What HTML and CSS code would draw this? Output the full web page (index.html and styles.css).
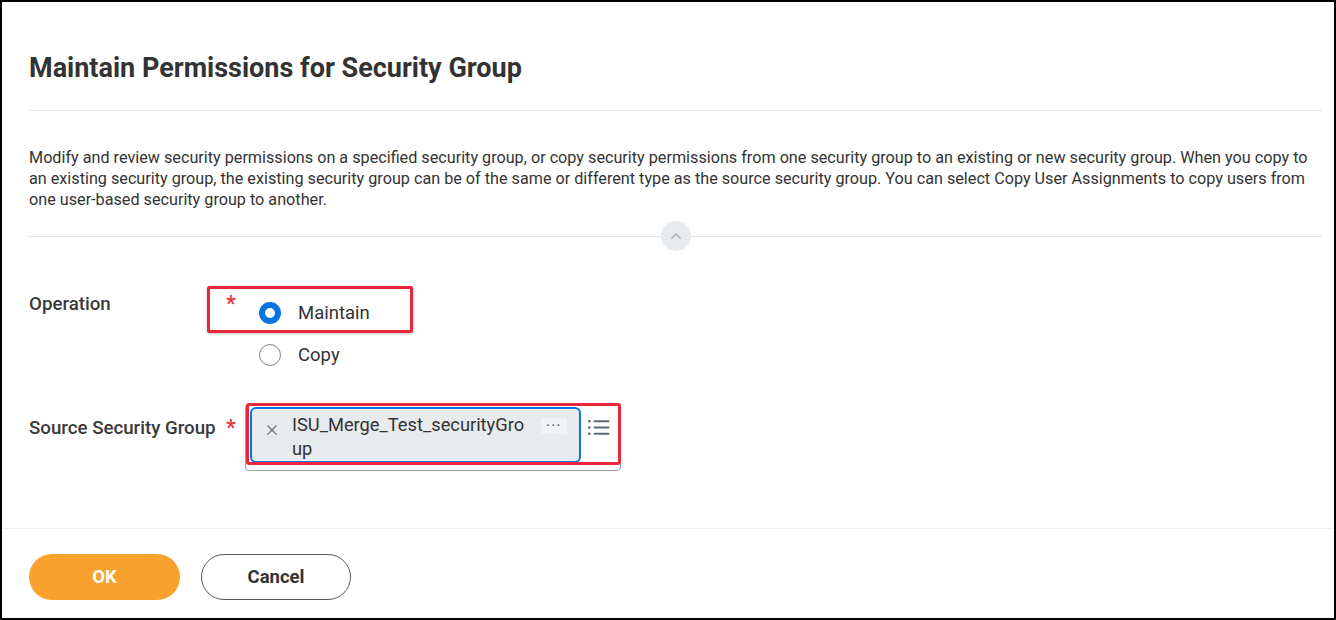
FILE: index.html
```html
<!DOCTYPE html>
<html>
<head>
<meta charset="utf-8">
<link rel="stylesheet" href="styles.css">
</head>
<body>
<div class="frame">
  <div class="main">
    <h1 class="title">Maintain Permissions for Security Group</h1>
    <div class="rule"></div>
    <p class="desc">Modify and review security permissions on a specified security group, or copy security permissions from one security group to an existing or new security group. When you copy to an existing security group, the existing security group can be of the same or different type as the source security group. You can select Copy User Assignments to copy users from one user-based security group to another.</p>
    <div class="collapse">
      <span class="collapse-line"></span>
      <span class="collapse-btn">
        <svg width="12" height="8" viewBox="0 0 12 8"><path d="M1.5 6.5 L6 2 L10.5 6.5" fill="none" stroke="#a3abb3" stroke-width="1.3"/></svg>
      </span>
      <span class="collapse-line"></span>
    </div>

    <div class="row row-op">
      <div class="label">Operation</div>
      <div class="field">
        <div class="annot annot-op"></div>
        <span class="req">*</span>
        <div class="radios">
          <label class="radio"><span class="dot on"></span><span>Maintain</span></label>
          <label class="radio"><span class="dot"></span><span>Copy</span></label>
        </div>
      </div>
    </div>

    <div class="row row-src">
      <div class="label">Source Security Group</div>
      <div class="field">
        <span class="req">*</span>
        <div class="prompt">
          <div class="annot annot-src"></div>
          <div class="pill">
            <span class="pill-x">
              <svg width="12" height="12" viewBox="0 0 12 12"><path d="M1.5 1.5 L10.5 10.5 M10.5 1.5 L1.5 10.5" stroke="#6f7780" stroke-width="1.4"/></svg>
            </span>
            <span class="pill-text">ISU_Merge_Test_securityGroup</span>
            <span class="pill-more">···</span>
          </div>
          <span class="list-icon">
            <svg width="22" height="17" viewBox="0 0 22 17"><g fill="#5f6a74"><rect x="0" y="1" width="2.6" height="2.4" rx="1"/><rect x="0" y="7.3" width="2.6" height="2.4" rx="1"/><rect x="0" y="13.6" width="2.6" height="2.4" rx="1"/><rect x="5.5" y="1.2" width="16" height="2" rx="1"/><rect x="5.5" y="7.5" width="16" height="2" rx="1"/><rect x="5.5" y="13.8" width="16" height="2" rx="1"/></g></svg>
          </span>
        </div>
      </div>
    </div>
  </div>
  <div class="footer">
    <button class="btn btn-ok">OK</button>
    <button class="btn btn-cancel">Cancel</button>
  </div>
</div>
</body>
</html>
```

FILE: styles.css
```css
html, body {
  margin: 0;
  padding: 0;
  background: #fff;
}
body {
  font-family: Roboto, "Liberation Sans", Arial, sans-serif;
  color: #333;
}
.frame {
  width: 1336px;
  height: 620px;
  box-sizing: border-box;
  border: 2px solid #000;
  display: flex;
  flex-direction: column;
  overflow: hidden;
}
.main {
  flex: 1;
  padding: 0 12px 0 27px;
}
.title {
  margin: 50px 0 0 0;
  font-size: 27px;
  line-height: 32px;
  font-weight: 700;
  color: #333;
}
.rule {
  height: 1px;
  background: #e3e3e8;
  margin-top: 26px;
}
.desc {
  margin: 36px 0 0 0;
  font-size: 16.2px;
  line-height: 21px;
  color: #333;
  padding-right: 2px;
}
.collapse {
  display: flex;
  align-items: center;
  margin-top: 11px;
  height: 30px;
}
.collapse-line {
  flex: 1;
  height: 1px;
  background: #e3e3e8;
}
.collapse-btn {
  width: 30px;
  height: 30px;
  border-radius: 50%;
  background: #e8ebee;
  display: flex;
  align-items: center;
  justify-content: center;
}
.row {
  display: flex;
}
.label {
  width: 196px;
  font-size: 18.7px;
  line-height: 22px;
  font-weight: 500;
  color: #3a3a3a;
}
.field {
  position: relative;
  display: flex;
}
.req {
  color: #e5323e;
  font-size: 22px;
  line-height: 22px;
  width: 20px;
  font-weight: 500;
  margin-left: 1px;
}
.row-op {
  margin-top: 42px;
}
.radios {
  display: flex;
  flex-direction: column;
  gap: 20px;
  padding-left: 13px;
  padding-top: 9px;
}
.radio {
  display: flex;
  align-items: center;
  gap: 17px;
  font-size: 18.5px;
  color: #333;
  height: 22px;
}
.dot {
  width: 22px;
  height: 22px;
  box-sizing: border-box;
  border-radius: 50%;
  border: 1px solid #7b858f;
  background: #fff;
}
.dot.on {
  border: 6px solid #0875e1;
}
.annot {
  position: absolute;
  box-sizing: border-box;
  border: 3px solid #e8283a;
  border-radius: 2px;
  box-shadow: 0 1px 3px rgba(0,0,0,0.25);
  pointer-events: none;
}
.annot-op {
  left: -18px;
  top: -7px;
  width: 206px;
  height: 47px;
}
.row-src {
  margin-top: 38px;
}
.row-src .label {
  padding-top: 13px;
}
.row-src .req {
  padding-top: 13px;
}
.prompt {
  position: relative;
  width: 376px;
  height: 67px;
  box-sizing: border-box;
  border: 1px solid #9aa0a6;
  border-radius: 4px;
  display: flex;
  align-items: flex-start;
  margin-left: -1px;
}
.annot-src {
  left: 0;
  top: -2px;
  width: 375px;
  height: 62px;
  box-shadow: none;
  border-radius: 3px;
}
.pill {
  margin: 2px 0 0 4px;
  width: 331px;
  height: 56px;
  box-sizing: border-box;
  border: 2px solid #0875e1;
  border-radius: 6px;
  background: #e8ebed;
  display: flex;
  align-items: flex-start;
  padding: 4px 8px 0 14px;
}
.pill-x {
  width: 12px;
  height: 20px;
  display: flex;
  align-items: center;
  margin-top: 7px;
}
.pill-text {
  width: 240px;
  margin-left: 14px;
  font-size: 18.3px;
  line-height: 24px;
  color: #333;
  word-break: break-all;
}
.pill-more {
  margin-left: 9px;
  margin-top: 5px;
  background: #f0f2f4;
  color: #555;
  font-size: 16px;
  line-height: 16px;
  padding: 0 5px;
  letter-spacing: 1px;
  height: 16px;
}
.list-icon {
  margin: 14px 0 0 7px;
  display: flex;
}
.footer {
  border-top: 1px solid #efefef;
  height: 90px;
  box-sizing: border-box;
  padding: 25px 0 0 27px;
  display: flex;
  align-items: flex-start;
  gap: 21px;
}
.btn {
  height: 46px;
  width: 151px;
  border-radius: 23px;
  font-family: Roboto, "Liberation Sans", Arial, sans-serif;
  font-size: 18.5px;
  font-weight: 700;
  cursor: pointer;
}
.btn-ok {
  background: #f8a12c;
  border: none;
  color: #fff;
}
.btn-cancel {
  width: 150px;
  background: #fff;
  border: 1px solid #555;
  color: #333;
}
```
